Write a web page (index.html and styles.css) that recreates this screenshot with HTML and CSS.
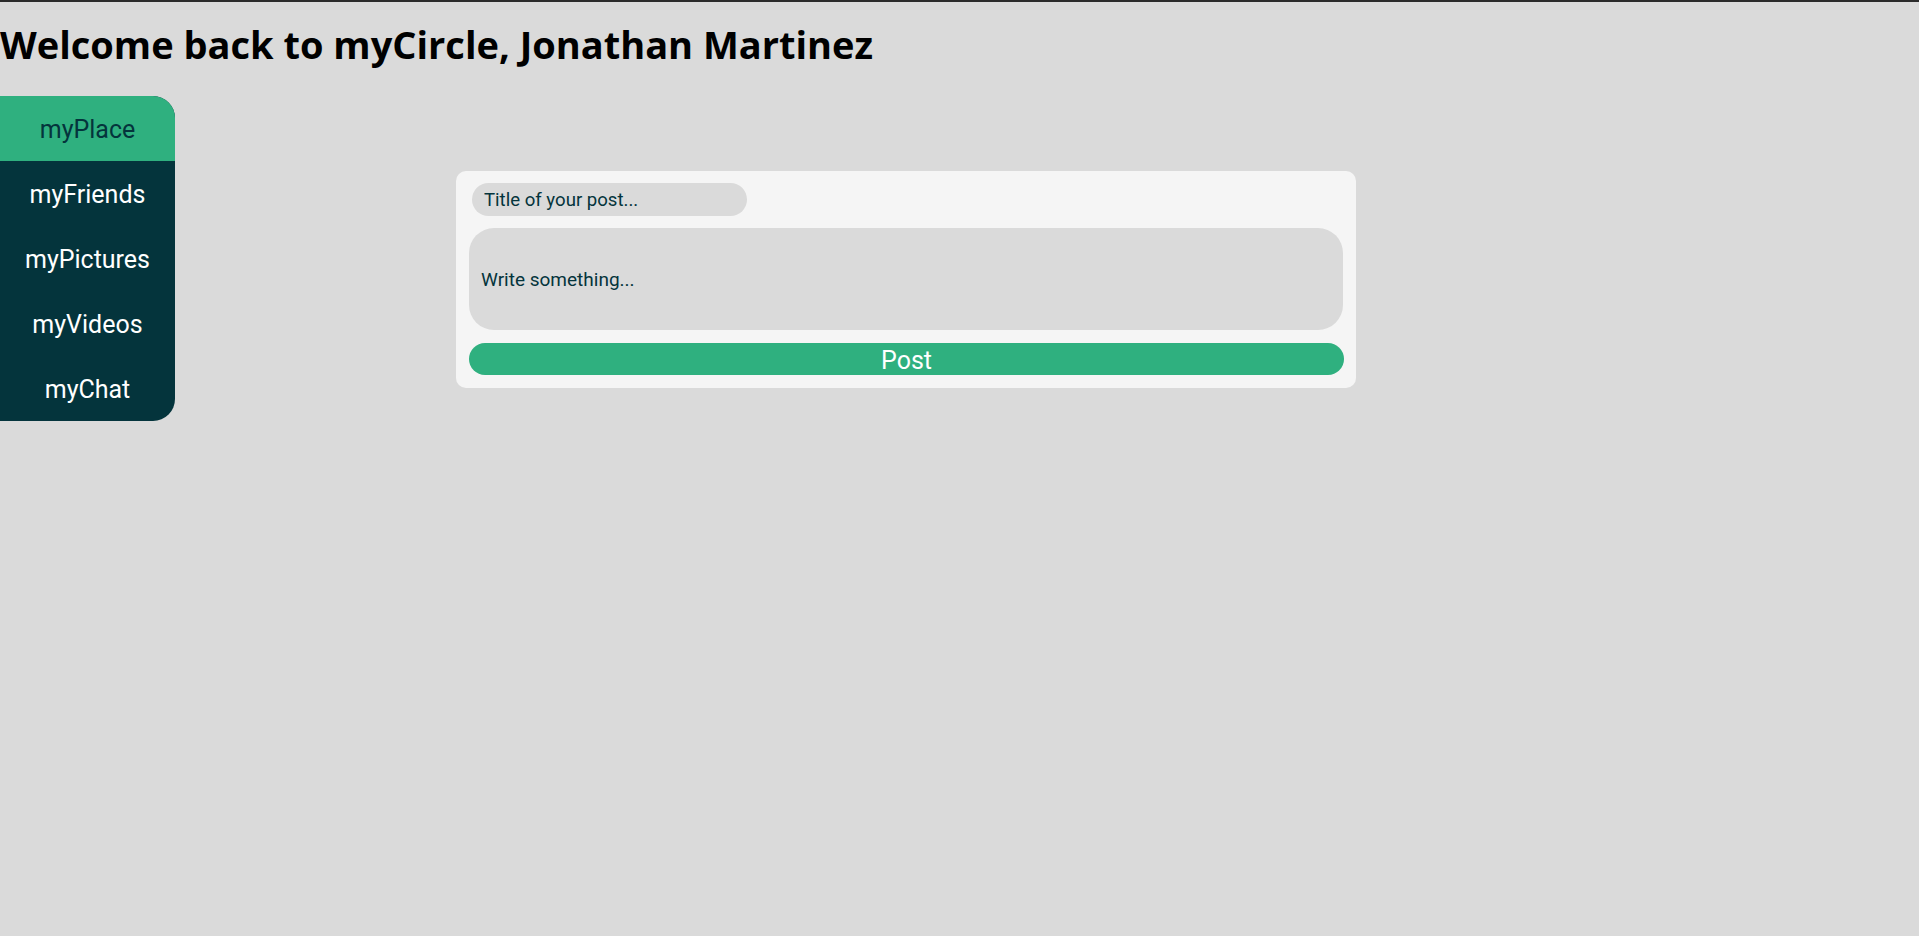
FILE: index.html
```html
<!DOCTYPE html>
<html lang="en">
<head>
<meta charset="utf-8">
<title>myCircle</title>
<link rel="stylesheet" href="styles.css">
</head>
<body>
<h1 class="welcome">Welcome back to myCircle, Jonathan Martinez</h1>
<div class="layout">
  <nav class="sidebar">
    <a class="nav-item active" href="#">myPlace</a>
    <a class="nav-item" href="#">myFriends</a>
    <a class="nav-item" href="#">myPictures</a>
    <a class="nav-item" href="#">myVideos</a>
    <a class="nav-item" href="#">myChat</a>
  </nav>
  <main class="main">
    <form class="post-card">
      <input class="post-title" type="text" placeholder="Title of your post...">
      <input class="post-body" type="text" placeholder="Write something...">
      <button class="post-btn" type="button">Post</button>
    </form>
  </main>
</div>
</body>
</html>
```
FILE: styles.css
```css
html, body {
  margin: 0;
  padding: 0;
}
body {
  background: #dadada;
  border-top: 2px solid #2b2b2b;
  min-height: 934px;
  font-family: Roboto, "Liberation Sans", sans-serif;
}
.welcome {
  margin: 15px 0 25px 0;
  font-family: "Open Sans", "Liberation Sans", sans-serif;
  font-weight: 700;
  font-size: 38px;
  line-height: 54px;
  color: #000;
}
.layout {
  display: flex;
  align-items: flex-start;
}
.sidebar {
  width: 175px;
  display: flex;
  flex-direction: column;
  background: #04343c;
  border-radius: 0 22px 22px 0;
  overflow: hidden;
}
.nav-item {
  display: block;
  height: 65px;
  line-height: 67px;
  text-align: center;
  font-size: 25px;
  color: #ffffff;
  text-decoration: none;
}
.nav-item.active {
  background: #2fb07f;
  color: #04343c;
}
.main {
  padding: 75px 0 0 281px;
}
.post-card {
  width: 900px;
  box-sizing: border-box;
  background: #f5f5f5;
  border-radius: 10px;
  padding: 12px 13px 13px 13px;
  display: flex;
  flex-direction: column;
  align-items: flex-start;
  gap: 12px;
}
.post-card input, .post-card button {
  font-family: Roboto, "Liberation Sans", sans-serif;
  border: none;
  outline: none;
  margin: 0;
  box-sizing: border-box;
}
.post-title {
  margin-left: 3px !important;
  width: 275px;
  height: 33px;
  border-radius: 17px;
  background: #dadada;
  padding: 0 12px;
  font-size: 18.6px;
  color: #04343c;
}
.post-body {
  width: 874px;
  height: 102px;
  border-radius: 25px;
  background: #dadada;
  padding: 0 12px;
  font-size: 19px;
  color: #04343c;
}
.post-title::placeholder, .post-body::placeholder {
  color: #04343c;
  opacity: 1;
}
.post-btn {
  margin-top: 1px !important;
  width: 875px;
  height: 32px;
  border-radius: 16px;
  background: #2fb07f;
  color: #ffffff;
  font-size: 25px;
  padding: 3px 0 0 0;
  line-height: 29px;
  cursor: pointer;
}
```
